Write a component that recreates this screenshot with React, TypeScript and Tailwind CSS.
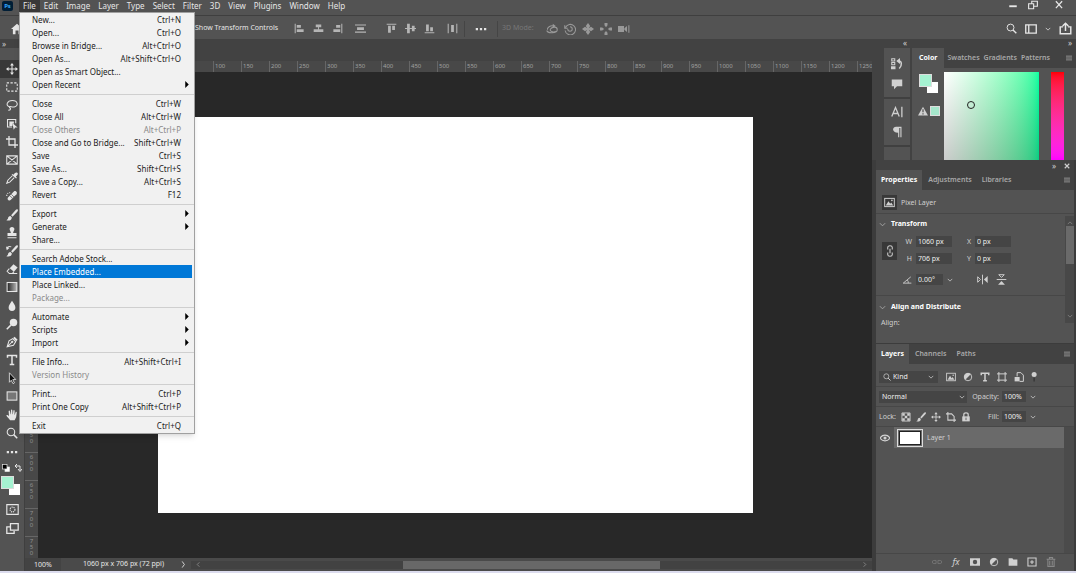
import type { ReactNode } from "react"

type MenuEntry = { label: string; keys?: string; disabled?: boolean; active?: boolean; sub?: boolean }

const menus = ["Edit", "Image", "Layer", "Type", "Select", "Filter", "3D", "View", "Plugins", "Window", "Help"]

const fileMenu: MenuEntry[][] = [
  [
    { label: "New...", keys: "Ctrl+N" },
    { label: "Open...", keys: "Ctrl+O" },
    { label: "Browse in Bridge...", keys: "Alt+Ctrl+O" },
    { label: "Open As...", keys: "Alt+Shift+Ctrl+O" },
    { label: "Open as Smart Object..." },
    { label: "Open Recent", sub: true },
  ],
  [
    { label: "Close", keys: "Ctrl+W" },
    { label: "Close All", keys: "Alt+Ctrl+W" },
    { label: "Close Others", keys: "Alt+Ctrl+P", disabled: true },
    { label: "Close and Go to Bridge...", keys: "Shift+Ctrl+W" },
    { label: "Save", keys: "Ctrl+S" },
    { label: "Save As...", keys: "Shift+Ctrl+S" },
    { label: "Save a Copy...", keys: "Alt+Ctrl+S" },
    { label: "Revert", keys: "F12" },
  ],
  [{ label: "Export", sub: true }, { label: "Generate", sub: true }, { label: "Share..." }],
  [
    { label: "Search Adobe Stock..." },
    { label: "Place Embedded...", active: true },
    { label: "Place Linked..." },
    { label: "Package...", disabled: true },
  ],
  [
    { label: "Automate", sub: true },
    { label: "Scripts", sub: true },
    { label: "Import", sub: true },
  ],
  [{ label: "File Info...", keys: "Alt+Shift+Ctrl+I" }, { label: "Version History", disabled: true }],
  [
    { label: "Print...", keys: "Ctrl+P" },
    { label: "Print One Copy", keys: "Alt+Shift+Ctrl+P" },
  ],
  [{ label: "Exit", keys: "Ctrl+Q" }],
]

// All icons are drawn on a 16x16 grid
function Icon({ className = "size-3", children }: { className?: string; children: ReactNode }) {
  return (
    <svg viewBox="0 0 16 16" className={`${className} shrink-0`} fill="none" stroke="currentColor" strokeWidth="1.4" aria-hidden="true">
      {children}
    </svg>
  )
}

function IconButton({ label, className = "", children }: { label: string; className?: string; children: ReactNode }) {
  return (
    <button type="button" aria-label={label} className={`flex items-center justify-center ${className}`}>
      {children}
    </button>
  )
}

const fill = { fill: "currentColor", stroke: "none" }

const moveIcon = (
  <>
    <path d="M8 2v12M2 8h12" />
    <path {...fill} d="M8 0l2.6 3.4H5.4zM8 16l2.6-3.4H5.4zM0 8l3.4-2.6v5.2zM16 8l-3.4-2.6v5.2z" />
  </>
)
const searchIcon = (
  <>
    <circle cx="6.6" cy="6.6" r="5" />
    <path strokeWidth="2" d="M10.2 10.2L15 15" />
  </>
)
const brushIcon = (
  <path {...fill} d="M15.6.6c-1-.8-2.2.2-3 1L6.8 8.4l1.9 1.8L15 3.6c.9-1 1.3-2.300.6-3zM5.900 9.300c-2 0-2.900 1.300-3.100 2.800C2.600 13.600 1.700 14.500.5 15c3.300.9 7 .2 7.300-3.800z" />
)
const halfCircle = (
  <>
    <circle cx="8" cy="8" r="6" />
    <path {...fill} d="M12.300 3.700A6 6 0 1 0 3.700 12.300z" />
  </>
)
const imageIcon = (
  <>
    <rect x="1" y="2" width="14" height="12" />
    <path {...fill} d="M2.500 12.500L6.500 6l2.500 3.800L10.500 8l3 4.500z" />
    <circle {...fill} cx="11.500" cy="5" r="1.200" />
  </>
)

const tools: { label: string; icon: ReactNode }[] = [
  { label: "Move", icon: moveIcon },
  { label: "Marquee", icon: <rect x="1" y="2.500" width="14" height="11" strokeDasharray="3 2" /> },
  {
    label: "Lasso",
    icon: <path d="M4.500 10.500C-1 8.500 1.500 2 8.500 2s9 7 2.500 8.600c-3 .7-6.500-1.600-6.500.4 0 1.500 2 .5 1.500 2.500-.2 1-1.500 1.500-3 1.500" />,
  },
  {
    label: "Object selection",
    icon: (
      <>
        <path d="M8 12H2V2h11v5" />
        <path {...fill} d="M4.500 4.500h6v3l-2-1v4h-4zM8.500 6.500l7 6-3.300.2-1.900 3z" />
      </>
    ),
  },
  { label: "Crop", icon: <path strokeWidth="1.700" d="M4 0v12h12M0 4h12v12" /> },
  { label: "Frame", icon: <path d="M1 2.500h14v11H1zM1 2.500l14 11M15 2.500l-14 11" /> },
  {
    label: "Eyedropper",
    icon: (
      <>
        <path d="M8.500 5L2.500 11 1 15l4-1.500 6-6" />
        <path {...fill} d="M7.500 3.500l1-1L10 3.800C12 .8 13.500 0 15 1s1 3-1.800 5l1.300 1.500-1 1z" />
      </>
    ),
  },
  {
    label: "Healing brush",
    icon: (
      <>
        <path {...fill} d="M10.500 2c2-2 5.500 1.500 3.500 3.500L6.500 13C4 15.500.500 12 3 9.500z" />
        <path stroke="#535353" strokeWidth="1" d="M7.200 5.800l3.500 3.500M5.300 7.700l3.500 3.500" />
        <path strokeDasharray="1.500 1.500" d="M1 8c0-3 2-4.500 4.500-4.500" />
      </>
    ),
  },
  { label: "Brush", icon: brushIcon },
  {
    label: "Clone stamp",
    icon: <path {...fill} d="M8 0c2 0 3.200 1.300 3.200 3 0 1.500-1.700 3-1.700 5H14v4H2V8h4.500c0-2-1.700-3.500-1.700-5C4.800 1.300 6 0 8 0zM2 13.500h12V15H2z" />,
  },
  {
    label: "History brush",
    icon: (
      <>
        {brushIcon}
        <path d="M1 4.500c1-2 3.500-3 6-2" />
        <path {...fill} d="M0 2l1 5 3.500-3z" />
      </>
    ),
  },
  {
    label: "Eraser",
    icon: (
      <>
        <path {...fill} d="M10 1.500l5.500 4.500-5 5.500L5 7z" />
        <path d="M4.500 7.500L1.500 11l3 3h4l2-2.500M8 14h7" />
      </>
    ),
  },
  {
    label: "Gradient",
    icon: (
      <>
        <defs>
          <linearGradient id="tool-gradient">
            <stop offset="0" stopColor="#222" />
            <stop offset="1" stopColor="#bbb" />
          </linearGradient>
        </defs>
        <rect x="1.500" y="2" width="13" height="12" fill="url(#tool-gradient)" />
      </>
    ),
  },
  { label: "Blur", icon: <path {...fill} d="M8 1c2 3.500 4.500 5.500 4.500 9a4.500 4.500 0 0 1-9 0C3.500 6.500 6 4.500 8 1z" /> },
  {
    label: "Dodge",
    icon: (
      <>
        <circle {...fill} cx="10" cy="6" r="5" />
        <path strokeWidth="2" d="M6.500 9.500L1 15" />
      </>
    ),
  },
  {
    label: "Pen",
    icon: (
      <>
        <path d="M1.500 14.500L4 6.500l5-3 4 4-3 5zM1.500 14.500L8 8" />
        <path {...fill} d="M9.500 2.800L11.500 1l4 4-1.800 2z" />
        <circle {...fill} cx="8.300" cy="7.800" r="1.500" />
      </>
    ),
  },
  { label: "Type", icon: <path strokeWidth="2" d="M2 5V2h12v3M8 2v12M5 14h6" /> },
  {
    label: "Path selection",
    icon: (
      <path strokeWidth="1.200" fill="#111" stroke="#ddd" d="M4.500 1l8.500 9-4 .2 2.300 4.300-2 1-2.300-4.500-2.500 2.700z" />
    ),
  },
  { label: "Rectangle", icon: <rect x="1.500" y="2.500" width="13" height="11" fill="#777" /> },
  {
    label: "Hand",
    icon: (
      <path {...fill} d="M5.500 15C4 12.500 1.500 10.500.5 8.500c1-1 2.200-.4 3.500 1L3.500 3c.2-1.300 1.500-1.300 1.800 0L6.200 7h.4L6.600 1.500c.2-1.300 1.600-1.300 1.800 0L8.800 7h.4l.6-4.800c.3-1.200 1.600-1 1.700.2L11.300 7.500h.4l1.100-3.200c.5-1 1.700-.6 1.600.4L13.500 11l-2 4z" />
    ),
  },
  { label: "Zoom", icon: searchIcon },
]

const alignIcons: { label: string; d: string; gap: string }[] = [
  { label: "Align left edges", d: "M1 1h1.500v14H1zM4 3h6v4H4zM4 9h10v4H4z", gap: "ml-4" },
  { label: "Align horizontal centers", d: "M4 2h8v4H4zM7.300 6h1.400v3H7.300zM1 9h14v4H1z", gap: "ml-2" },
  { label: "Align right edges", d: "M13.500 1H15v14h-1.500zM6 3h6v4H6zM2 9h10v4H2z", gap: "ml-2" },
  { label: "Distribute vertically", d: "M0 2h16v1.500H0zM3 6h10v4H3zM0 12.500h16V14H0z", gap: "ml-3" },
  { label: "Align top edges", d: "M1 1h14v1.500H1zM3 4h4v10H3zM9 4h4v6H9z", gap: "ml-5" },
  { label: "Align vertical centers", d: "M3 1h4v14H3zM10 4h4v8h-4zM0 7.300h16v1.400H0z", gap: "ml-2" },
  { label: "Align bottom edges", d: "M1 13.500h14V15H1zM3 2h4v10H3zM9 6h4v6H9z", gap: "ml-2" },
  { label: "Distribute horizontally", d: "M1 1h1.500v14H1zM6 3h4v10H6zM13.500 1H15v14h-1.500z", gap: "ml-3" },
]

const modeIcons: { label: string; icon: ReactNode }[] = [
  {
    label: "Orbit",
    icon: (
      <>
        <path d="M1 10c1 4 14 4 14-1s-7-4-9-1 4 5 7 3" />
        <path d="M2 9c-1-3 4-6 8-5" />
        <path {...fill} d="M9 1l4 3-4 3z" />
      </>
    ),
  },
  { label: "Roll", icon: <path d="M1 3v4h4M2 6a7 7 0 1 1-.5 4M8 5a3 3 0 1 1-3 3" /> },
  {
    label: "Pan",
    icon: <path {...fill} d="M8 0l3 4-2 3 3-2 4 3-4 3-3-2 2 3-3 4-3-4 2-3-3 2-4-3 4-3 3 2-2-3z" />,
  },
  {
    label: "Slide",
    icon: <path {...fill} d="M6 0h4v3L8 5.500 6 3zM6 16h4v-3L8 10.500 6 13zM0 6v4h3l2.500-2L3 6zM16 6v4h-3l-2.500-2L13 6z" />,
  },
  {
    label: "Zoom camera",
    icon: (
      <>
        <path {...fill} d="M0 4h8v8H0zM8.500 7l3.500-3v8l-3.500-3z" />
        <path d="M14.500 3v10" />
      </>
    ),
  },
]

// The open File menu covers the start of both rulers, so those ticks carry no number
const columnSteps = Array.from({ length: 30 }, (_, i) => (i < 6 ? "" : String(i * 50 - 200)))
const rowSteps = Array.from({ length: 18 }, (_, i) => (i < 13 ? "" : String(i * 50 - 100)))

function Chevron({ className = "size-1.5" }: { className?: string }) {
  return (
    <Icon className={className}>
      <path strokeWidth="2" d="M2 5l6 6 6-6" />
    </Icon>
  )
}

function FileMenu() {
  return (
    <ul className="absolute left-0 top-full z-20 w-44 border border-[#a0a0a0] bg-[#f1f1f1] pb-px text-[#222] shadow-md">
      {fileMenu.map((group, g) => (
        <li key={g} className={g > 0 ? "mt-[3px] border-t border-[#cfcfcf] pt-0.5" : ""}>
          <ul>
            {group.map((item) => (
              <li key={item.label} className="pl-px pr-0.5">
                <button
                  type="button"
                  disabled={item.disabled}
                  className={`flex h-[13px] w-full items-center px-[11px] text-left text-[8px] leading-[13px] ${
                    item.active ? "bg-[#0078d7] text-white" : item.disabled ? "text-[#8a8a8a]" : ""
                  }`}
                >
                  <span className="grow">{item.label}</span>
                  {item.keys && <span>{item.keys}</span>}
                  {item.sub && (
                    <svg viewBox="0 0 4 8" className="-mr-2 h-[7px] w-1" aria-hidden="true">
                      <path d="M0 0l4 4-4 4z" fill="#000" />
                    </svg>
                  )}
                </button>
              </li>
            ))}
          </ul>
        </li>
      ))}
    </ul>
  )
}

function MenuBar() {
  return (
    <header className="flex h-4 shrink-0 items-start border-b border-[#3f3f3f] text-[8px] leading-3">
      <div className="flex h-3 w-[19px] items-center pl-0.5">
        <span className="flex h-2.5 w-[11px] items-center justify-center rounded-xs bg-[#001e36] text-[6px] font-bold text-[#31a8ff]">
          Ps
        </span>
      </div>
      <nav className="flex">
        <div className="relative">
          <button type="button" className="block h-3 bg-[#383838] px-1">
            File
          </button>
          <FileMenu />
        </div>
        {menus.map((name) => (
          <button key={name} type="button" className="h-3 px-1">
            {name}
          </button>
        ))}
      </nav>
      <div className="ml-auto flex items-center gap-2.5 pr-3">
        <IconButton label="Minimize">
          <Icon className="size-2.5">
            <path strokeWidth="3" d="M2 10h12" />
          </Icon>
        </IconButton>
        <IconButton label="Restore">
          <Icon className="size-2.5">
            <path strokeWidth="1.800" d="M1 6h8v8H1zM6 6V2h9v8H9" />
          </Icon>
        </IconButton>
        <IconButton label="Close window" className="ml-1.5">
          <Icon className="size-2.5">
            <path strokeWidth="2" d="M3 2l10 11M13 2L3 13" />
          </Icon>
        </IconButton>
      </div>
    </header>
  )
}

function OptionsBar() {
  return (
    <div className="flex h-[23px] shrink-0 items-center pt-0.5 text-[7px]">
      <IconButton label="Home" className="ml-[11px]">
        <Icon className="size-3">
          <path {...fill} d="M8 1l8 7h-2.500v7H10v-5H6v5H2.500V8H0z" />
        </Icon>
      </IconButton>
      <label className="ml-40 flex items-center gap-1">
        <input type="checkbox" className="size-2" />
        Show Transform Controls
      </label>
      <div className="flex text-[#b5b5b5]">
        {alignIcons.map((item) => (
          <IconButton key={item.label} label={item.label} className={item.gap}>
            <Icon className="size-[11px]">
              <path {...fill} d={item.d} />
            </Icon>
          </IconButton>
        ))}
      </div>
      <IconButton label="More options" className="ml-1.5 h-4 border-x border-[#454545] px-2.5">
        <Icon className="size-3">
          <path {...fill} d="M1 6.500h3V9.500H1zM6.500 6.500h3V9.500h-3zM12 6.500h3V9.500h-3z" />
        </Icon>
      </IconButton>
      <span className="ml-1 text-[#777]">3D Mode:</span>
      <div className="ml-3 flex gap-1.5 text-[#999]">
        {modeIcons.map((item) => (
          <IconButton key={item.label} label={item.label}>
            <Icon>{item.icon}</Icon>
          </IconButton>
        ))}
      </div>
      <div className="ml-auto flex items-center pr-1">
        <IconButton label="Search">
          <Icon className="size-[11px]">{searchIcon}</Icon>
        </IconButton>
        <IconButton label="Workspace" className="ml-2">
          <Icon>
            <path strokeWidth="1.800" d="M1 2.500h14v11H1zM5 3v10" />
          </Icon>
        </IconButton>
        <IconButton label="Choose workspace" className="ml-2">
          <Chevron />
        </IconButton>
        <IconButton label="Share" className="ml-2">
          <Icon className="size-[13px]">
            <path strokeWidth="1.800" d="M5 6H1.500v8.500h13V6H11M8 11V2M4.500 5L8 1.500 11.500 5" />
          </Icon>
        </IconButton>
      </div>
    </div>
  )
}

function Toolbar() {
  return (
    <aside className="flex w-[25px] shrink-0 flex-col border-r border-[#3f3f3f]">
      <div className="flex h-[9px] items-center bg-[#424242] pl-0.5 text-[8px] leading-none text-[#ccc]">»</div>
      <div className="mt-3 flex h-[382px] flex-col">
        {tools.map((tool, i) => (
          <IconButton
            key={tool.label}
            label={tool.label}
            className={`flex-1 ${i === 0 ? "bg-[#383838]" : ""}`}
          >
            <Icon>{tool.icon}</Icon>
          </IconButton>
        ))}
      </div>
      <IconButton label="Edit toolbar" className="h-5">
        <Icon>
          <path {...fill} d="M1 6.500h3V9.500H1zM6.500 6.500h3V9.500h-3zM12 6.500h3V9.500h-3z" />
        </Icon>
      </IconButton>
      <div className="flex h-3 items-center justify-between px-0.5">
        <IconButton label="Default colors">
          <Icon className="size-2">
            <rect x="6" y="6" width="9" height="9" fill="#fff" />
            <rect x="1" y="1" width="9" height="9" fill="#000" />
          </Icon>
        </IconButton>
        <IconButton label="Switch colors">
          <Icon className="size-2">
            <path strokeWidth="2" d="M3 4h9v9M6 0L2 4l4 4M8 10l4 5 4-5" />
          </Icon>
        </IconButton>
      </div>
      <Swatches />
      <IconButton label="Quick mask" className="mt-[7px]">
        <Icon className="size-[13px]">
          <path d="M1 2h14v12H1z" />
          <circle cx="8" cy="8" r="3" strokeDasharray="1.500 1" />
        </Icon>
      </IconButton>
      <IconButton label="Screen mode" className="mt-1.5">
        <Icon className="size-[13px]">
          <path strokeWidth="1.600" d="M5 6H1v8h9v-3M5.500 2H15v8H5.500z" />
        </Icon>
      </IconButton>
    </aside>
  )
}

function Swatches() {
  return (
    <div className="grid w-[22px] shrink-0 grid-cols-[7px_6px_7px] grid-rows-[7px_6px_7px] pl-px pt-0.5">
      <span className="col-span-2 col-start-2 row-span-2 row-start-2 border border-[#555] bg-white" />
      <span className="z-10 col-span-2 col-start-1 row-span-2 row-start-1 border border-[#ddd] bg-[#a5f2d1]" />
    </div>
  )
}

function Workspace() {
  return (
    <main className="flex min-w-0 grow flex-col">
      <div className="h-[22px] shrink-0 bg-[#424242]" />
      <div className="flex h-[11px] shrink-0 overflow-hidden bg-[#484848] pl-5 text-[6px] leading-[11px] text-[#a0a0a0]">
        {columnSteps.map((n, i) => (
          <span key={i} className="w-7 shrink-0 border-l border-[#666] pl-px">
            {n}
          </span>
        ))}
      </div>
      <div className="flex min-h-0 grow">
        <div className="w-[13px] shrink-0 overflow-hidden bg-[#484848] text-[6px] leading-[6px] text-[#909090]">
          <div className="-mt-3 flex flex-col">
            {rowSteps.map((n, i) => (
              <span key={i} className="flex h-7 shrink-0 flex-col items-center border-t border-[#666] pt-px">
                {n.split("").map((c, k) => (
                  <span key={k}>{c}</span>
                ))}
              </span>
            ))}
          </div>
        </div>
        <div className="flex min-w-0 grow items-center justify-center overflow-hidden bg-[#282828]">
          <div className="h-[396px] w-[595px] shrink-0 bg-white" />
        </div>
      </div>
      <footer className="flex h-[13px] shrink-0 items-center bg-[#4a4a4a] text-[7px]">
        <span className="w-9 self-stretch bg-[#434343] pl-[9px] leading-[13px]">100%</span>
        <span className="ml-[22px]">1060 px x 706 px (72 ppi)</span>
        <IconButton label="Document info" className="ml-4">
          <Icon className="size-[7px]">
            <path strokeWidth="2" d="M5 1l5 7-5 7" />
          </Icon>
        </IconButton>
        <div className="ml-1 flex grow items-center bg-[#424242] px-1 text-[#888]">
          <Icon className="size-[7px]">
            <path strokeWidth="2" d="M10 3L5 8l5 5" />
          </Icon>
          <div className="flex grow justify-center">
            <div className="h-2 w-[39%] bg-[#686868]" />
          </div>
          <Icon className="size-[7px]">
            <path strokeWidth="2" d="M6 3l5 5-5 5" />
          </Icon>
        </div>
      </footer>
    </main>
  )
}

function Tabs({ names, tight = false }: { names: string[]; tight?: boolean }) {
  return (
    <div className="flex h-5 shrink-0 items-center bg-[#424242] text-[7px] font-semibold text-[#a8a8a8]">
      {names.map((name, i) => (
        <button
          key={name}
          type="button"
          className={`h-full shrink-0 ${i === 0 ? "bg-[#535353] font-bold text-white" : ""} ${
            tight ? (i === 0 ? "mr-[3px] px-[7px]" : "pr-1") : i === 0 ? "mr-1.5 px-[5px]" : "pr-2.5"
          }`}
        >
          {name}
        </button>
      ))}
      <IconButton label="Panel menu" className="ml-auto mr-1">
        <Icon className="size-1.5">
          <path strokeWidth="2" d="M0 3h16M0 8h16M0 13h16" />
        </Icon>
      </IconButton>
    </div>
  )
}

function ColorPanel() {
  return (
    <section className="flex min-w-0 grow flex-col">
      <div className="h-[9px] pr-1 text-right text-[8px] leading-[7px]">»</div>
      <Tabs names={["Color", "Swatches", "Gradients", "Patterns"]} tight />
      <div className="flex grow bg-[#535353] pl-1.5 pr-3 pt-1">
        <div className="w-[26px] shrink-0">
          <Swatches />
          <div className="mt-3 flex items-center gap-0.5">
            <Icon className="size-2.5">
              <path {...fill} d="M8 1l8 14H0z" />
              <path stroke="#535353" strokeWidth="2" d="M8 5v5M8 11.500v2" />
            </Icon>
            <span className="size-2.5 border border-[#ddd] bg-[#a5e6cb]" />
          </div>
        </div>
        <div className="relative grow bg-linear-to-r from-white to-[#00ffa2]">
          <div className="h-full bg-linear-to-b from-transparent to-black/20" />
          <span className="absolute left-[23px] top-[29px] size-2 rounded-full border border-[#222]" />
        </div>
        <div className="ml-3 w-[13px] bg-linear-to-b from-[#ff0000] to-[#ff00ff]" />
      </div>
    </section>
  )
}

function IconStrip() {
  return (
    <div className="ml-3 mr-px w-[27px] shrink-0">
      <div className="h-[9px] pr-1 text-right text-[8px] leading-[7px]">«</div>
      <div className="flex h-[112px] w-[26px] flex-col bg-[#535353]">
        <div className="flex flex-col items-center gap-2 border-b-2 border-[#404040] pb-[7px] pt-2.5">
          <IconButton label="History">
            <Icon>
              <path d="M1 1h4v3H1zM1 6h4v3H1z" />
              <path {...fill} d="M0 11h6v4H0z" />
              <path strokeWidth="2" d="M9 4c6-1 6 6 2 10" />
              <path {...fill} d="M7 4l5-4v8z" />
            </Icon>
          </IconButton>
          <IconButton label="Comments">
            <Icon>
              <path {...fill} d="M1 2h14v9H8l-4 4v-4H1z" />
            </Icon>
          </IconButton>
        </div>
        <div className="flex flex-col items-center gap-2 border-b-2 border-[#404040] py-[7px]">
          <IconButton label="Character">
            <Icon>
              <path strokeWidth="1.700" d="M1 14L6 2l5 12M3 10h6M14.500 1v14" />
            </Icon>
          </IconButton>
          <IconButton label="Paragraph">
            <Icon>
              <path {...fill} d="M14 1v14h-1.500V2.500H11V15H9.500V9C1 9 1 1 7 1z" />
            </Icon>
          </IconButton>
        </div>
      </div>
    </div>
  )
}

function Field({ label, value }: { label: string; value: string }) {
  return (
    <label className="flex items-center gap-1">
      <span className="w-2.5 text-right">{label}</span>
      <input defaultValue={value} className="h-[11px] w-9 bg-[#454545] px-0.5 text-[7px] text-[#eee]" />
    </label>
  )
}

function PropertiesPanel() {
  return (
    <section className="flex h-[184px] shrink-0 flex-col border-b border-[#3c3c3c]">
      <div className="flex h-2.5 items-center justify-end gap-2 pr-1 pt-0.5 text-[8px] leading-none">
        <span>»</span>
        <IconButton label="Close panel">
          <Icon className="size-1.5">
            <path strokeWidth="3" d="M2 2l12 12M14 2L2 14" />
          </Icon>
        </IconButton>
      </div>
      <Tabs names={["Properties", "Adjustments", "Libraries"]} />
      <div className="flex h-6 items-center gap-1 border-b border-[#474747] bg-[#535353] pl-1.5 pt-0.5">
        <span className="flex size-[15px] items-center justify-center bg-[#383838]">
          <Icon className="size-[11px]">{imageIcon}</Icon>
        </span>
        Pixel Layer
      </div>
      <div className="flex grow bg-[#535353]">
        <div className="flex grow flex-col">
          <h2 className="flex h-5 items-center gap-[5px] pl-[3px] font-bold text-white">
            <Chevron className="size-[7px] text-[#aaa]" />
            Transform
          </h2>
          <div className="flex items-center border-b border-[#474747] pb-2.5 pl-1.5 pt-0.5">
            <IconButton label="Link width and height" className="mb-5 h-[18px] w-[15px] bg-[#383838]">
              <Icon>
                <path d="M5 6V3c0-2.500 6-2.500 6 0v3M5 10v3c0 2.500 6 2.500 6 0v-3M8 5v6" />
              </Icon>
            </IconButton>
            <div className="grid grid-cols-2 gap-x-2 gap-y-1.5 pl-[5px]">
              <Field label="W" value="1060 px" />
              <Field label="X" value="0 px" />
              <Field label="H" value="706 px" />
              <Field label="Y" value="0 px" />
              <div className="flex items-center gap-1 pt-1">
                <Icon className="size-2.5">
                  <path d="M14 3L2 13h13M8 8c2 1 2 3 2 5" />
                </Icon>
                <select aria-label="Rotate" className="h-[11px] w-[27px] appearance-none bg-[#454545] pl-0.5 text-[7px] text-[#eee]">
                  <option>0.00°</option>
                </select>
                <Chevron />
              </div>
              <div className="flex items-center gap-2 pl-4 pt-1">
                <IconButton label="Flip horizontal">
                  <Icon className="size-[11px]">
                    <path d="M1 4l4 4-4 4zM8 1v14" />
                    <path {...fill} d="M15.500 3v10L10 8z" />
                  </Icon>
                </IconButton>
                <IconButton label="Flip vertical">
                  <Icon className="size-[11px]">
                    <path d="M4 1h8L8 5zM1 8h14" />
                    <path {...fill} d="M3 15.500h10L8 10z" />
                  </Icon>
                </IconButton>
              </div>
            </div>
          </div>
          <h2 className="flex h-[22px] items-center gap-[5px] pl-[3px] font-bold text-white">
            <Chevron className="size-[7px] text-[#aaa]" />
            Align and Distribute
          </h2>
          <p className="pl-[5px]">Align:</p>
        </div>
        <div className="mb-5 mt-0.5 flex w-[9px] shrink-0 flex-col items-center bg-[#484848] py-1 text-[#888]">
          <Icon className="size-1.5">
            <path strokeWidth="2" d="M2 11l6-6 6 6" />
          </Icon>
          <div className="h-[38px] w-2 bg-[#6a6a6a]" />
          <Chevron className="mt-auto size-1.5" />
        </div>
      </div>
    </section>
  )
}

function Percent({ label }: { label: string }) {
  return (
    <label className="ml-auto flex items-center gap-[3px] pr-9">
      {label}
      <span className="flex w-9 items-center gap-1">
        <input defaultValue="100%" className="h-[11px] w-6 bg-[#454545] px-0.5 text-[7px] text-[#eee]" />
        <Chevron />
      </span>
    </label>
  )
}

function LayersPanel() {
  return (
    <section className="flex min-h-0 grow flex-col">
      <Tabs names={["Layers", "Channels", "Paths"]} />
      <div className="flex grow flex-col bg-[#535353]">
        <div className="flex h-[23px] items-center border-b border-[#474747] pl-[3px] pt-1">
          <div className="flex h-3 w-[59px] items-center bg-[#454545] px-1">
            <Icon className="size-2">{searchIcon}</Icon>
            <select aria-label="Filter type" className="min-w-0 grow appearance-none pl-0.5 text-[7px] text-[#eee]">
              <option>Kind</option>
            </select>
            <Chevron />
          </div>
          <div className="ml-2 flex gap-[7px]">
            <IconButton label="Filter pixel layers">
              <Icon className="size-2.5">{imageIcon}</Icon>
            </IconButton>
            <IconButton label="Filter adjustment layers">
              <Icon className="size-2.5">{halfCircle}</Icon>
            </IconButton>
            <IconButton label="Filter type layers">
              <Icon className="size-2.5">
                <path strokeWidth="2.400" d="M2 5V2h12v3M8 2v12M5 14h6" />
              </Icon>
            </IconButton>
            <IconButton label="Filter shape layers">
              <Icon className="size-2.5">
                <path strokeWidth="1.600" d="M3 0v16M13 0v16M0 3h16M0 13h16" />
              </Icon>
            </IconButton>
            <IconButton label="Filter smart objects">
              <Icon className="size-2.5">
                <path strokeWidth="1.600" d="M5 7V1h6l4 4v10H9" />
                <path {...fill} d="M1 8h8v7H1z" />
              </Icon>
            </IconButton>
            <IconButton label="Toggle filter">
              <Icon className="size-2.5">
                <circle {...fill} cx="5" cy="4" r="4" />
                <path stroke="#333" strokeWidth="2" d="M5 9v6" />
              </Icon>
            </IconButton>
          </div>
        </div>
        <div className="flex h-5 items-center border-b border-[#474747] pl-[3px]">
          <div className="flex h-3 w-[88px] items-center bg-[#454545] px-0.5">
            <select aria-label="Blend mode" className="min-w-0 grow appearance-none pl-px text-[7px] text-[#eee]">
              <option>Normal</option>
            </select>
            <Chevron />
          </div>
          <Percent label="Opacity:" />
        </div>
        <div className="flex h-5 items-center border-b border-[#474747] pl-[3px]">
          Lock:
          <div className="ml-[5px] flex gap-[5px]">
            <IconButton label="Lock transparent pixels">
              <Icon className="size-2.5">
                <path d="M1.500 1.500h13v13h-13z" />
                <path {...fill} d="M2 2h4v4H2zM10 2h4v4h-4zM6 6h4v4H6zM2 10h4v4H2zM10 10h4v4h-4z" />
              </Icon>
            </IconButton>
            <IconButton label="Lock image pixels">
              <Icon className="size-2.5">{brushIcon}</Icon>
            </IconButton>
            <IconButton label="Lock position">
              <Icon className="size-2.5">{moveIcon}</Icon>
            </IconButton>
            <IconButton label="Lock artboard">
              <Icon className="size-2.5">
                <path strokeWidth="1.700" d="M3 0v13h13M0 3h9l4 4v9" />
              </Icon>
            </IconButton>
            <IconButton label="Lock all">
              <Icon className="size-2.5">
                <path strokeWidth="2" d="M4.500 8V4c0-3.500 7-3.500 7 0v4" />
                <path {...fill} d="M2 7h12v8H2z" />
                <path stroke="#535353" d="M8 9v4" />
              </Icon>
            </IconButton>
          </div>
          <Percent label="Fill:" />
        </div>
        <div className="flex grow">
          <div className="grow">
            <div className="flex h-[21px] items-center">
              <IconButton label="Toggle visibility" className="w-[18px] shrink-0 self-stretch">
                <Icon className="size-2.5">
                  <path strokeWidth="2" d="M0 8c4-6 12-6 16 0-4 6-12 6-16 0z" />
                  <circle {...fill} cx="8" cy="8" r="2.500" />
                </Icon>
              </IconButton>
              <div className="flex grow items-center gap-1 self-stretch bg-[#6a6a6a] pl-[3px]">
                <span className="border border-[#ddd] p-px">
                  <span className="block h-[14px] w-[22px] border border-[#222] bg-white" />
                </span>
                Layer 1
              </div>
            </div>
          </div>
          <div className="w-2.5 shrink-0 bg-[#4b4b4b]" />
        </div>
        <footer className="flex h-[18px] items-center justify-end gap-[9px] border-t border-[#474747] pb-0.5 pr-[18px]">
          <IconButton label="Link layers" className="text-[#777]">
            <Icon className="size-2.5">
              <path d="M6.500 5.500H3a2.500 2.500 0 0 0 0 5h3.500zM9.500 5.500H13a2.500 2.500 0 0 1 0 5H9.500z" />
            </Icon>
          </IconButton>
          <button type="button" className="w-2.5 text-[9px] italic leading-none">
            fx
          </button>
          <IconButton label="Add mask">
            <Icon className="size-2.5">
              <path {...fill} fillRule="evenodd" d="M0 2h16v12H0zM8 4.500a3.500 3.500 0 1 0 0 7 3.500 3.500 0 0 0 0-7z" />
            </Icon>
          </IconButton>
          <IconButton label="New adjustment layer">
            <Icon className="size-2.5">{halfCircle}</Icon>
          </IconButton>
          <IconButton label="New group">
            <Icon className="size-2.5">
              <path {...fill} d="M1 2h6l1.500 2H15v10H1z" />
            </Icon>
          </IconButton>
          <IconButton label="New layer">
            <Icon className="size-2.5">
              <path strokeWidth="1.700" d="M1.500 1.500h13v13h-13zM8 5v6M5 8h6" />
            </Icon>
          </IconButton>
          <IconButton label="Delete layer" className="text-[#888]">
            <Icon className="size-2.5">
              <path strokeWidth="1.700" d="M1 3.500h14M5.500 3V1h5v2M3 4v11h10V4M6 6v7M10 6v7" />
            </Icon>
          </IconButton>
        </footer>
      </div>
    </section>
  )
}

export default function App() {
  return (
    <div className="flex h-screen flex-col overflow-hidden bg-[#535353] font-['Noto_Sans',sans-serif] text-[#e6e6e6]">
      <MenuBar />
      <OptionsBar />
      <div className="flex min-h-0 grow">
        <Toolbar />
        <Workspace />
        {/* Docked panels */}
        <aside className="flex w-[204px] shrink-0 flex-col bg-[#424242] text-[7px] leading-[10px] text-[#d0d0d0]">
          <div className="flex h-[121px] shrink-0">
            <IconStrip />
            <ColorPanel />
          </div>
          <div className="flex min-h-0 grow flex-col border-l-4 border-r-2 border-[#3c3c3c]">
            <PropertiesPanel />
            <LayersPanel />
          </div>
        </aside>
      </div>
      <div className="h-0.5 shrink-0 bg-[#dcdcee]" />
    </div>
  )
}
